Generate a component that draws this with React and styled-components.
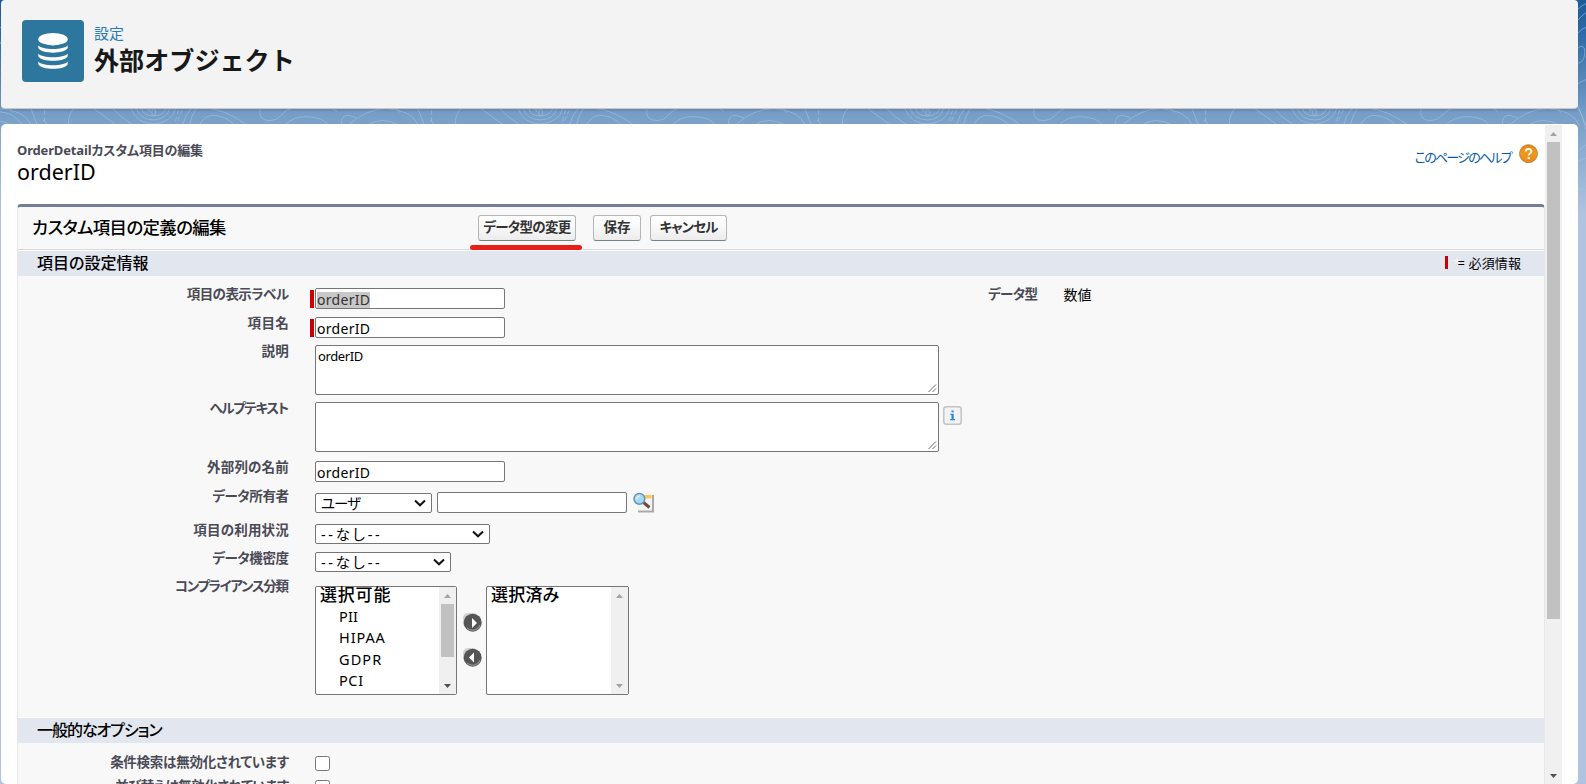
import React from "react";
import styled, { createGlobalStyle, css } from "styled-components";

const GlobalStyle = createGlobalStyle`
  * { box-sizing: border-box; }
  body {
    margin: 0;
    font-family: "Noto Sans", "Noto Sans CJK JP", sans-serif;
    color: #000;
  }
`;

const Page = styled.div`
  position: relative;
  width: 1586px;
  height: 784px;
  overflow: hidden;
  padding: 0 8px 0 1px;
  display: flex;
  flex-direction: column;
  gap: 15px;
  background: linear-gradient(#1b5c9b 0, #2d6ca8 35px, #789fc8 117px, #b0c4df 215px, #b0c4df 100%);
`;

const Backdrop = styled.svg`
  position: absolute;
  left: 0;
  top: 0;
`;

const Header = styled.header`
  position: relative;
  flex: none;
  height: 109px;
  display: flex;
  gap: 10px;
  padding: 20px 21px;
  background: #f3f3f3;
  border-radius: 4px;
  border-bottom: 1px solid #c9c7c5;
  box-shadow: 0 2px 2px rgba(0, 0, 0, 0.1);
`;

const ObjectIcon = styled.div`
  width: 62px;
  height: 62px;
  border-radius: 4px;
  background: #2d769e;
`;

const HeaderText = styled.div`
  display: flex;
  flex-direction: column;
  padding-top: 3px;
`;

const Fit = css`
  white-space: nowrap;
  letter-spacing: ${(p) => p.$ls || 0}px;
  font-feature-settings: ${(p) => (p.$full ? "normal" : '"palt"')};
`;

const Crumb = styled.span`
  ${Fit}
  font-size: 15px;
  line-height: 20px;
  color: #2a7ab5;
`;

const PageTitle = styled.h1`
  ${Fit}
  margin: 0;
  font-size: 25.1px;
  line-height: 34px;
  font-weight: 700;
  color: #181818;
`;

const Card = styled.main`
  position: relative;
  flex: none;
  height: 660px;
  display: flex;
  padding-top: 1px;
  background: #fff;
  border-radius: 5px;
  overflow: hidden;
`;

const Content = styled.div`
  width: 1544px;
  padding-left: 16px;
`;

const Intro = styled.div`
  height: 79px;
  display: flex;
  justify-content: space-between;
  padding: 15px 7px 0 0;
`;

const IntroTitles = styled.div`
  display: flex;
  flex-direction: column;
`;

const Kicker = styled.span`
  ${Fit}
  font-size: 13px;
  line-height: 20px;
  font-weight: 700;
  color: #4a4a56;
`;

const EntityName = styled.span`
  ${Fit}
  font-size: 21.5px;
  line-height: 23px;
`;

const HelpLink = styled.a`
  display: flex;
  gap: 8px;
  height: 28px;
  padding-top: 4px;
  color: #015ba7;
`;

const HelpText = styled.span`
  ${Fit}
  font-size: 13px;
  line-height: 20px;
  padding-top: 3px;
`;

const Panel = styled.section`
  width: 1528px;
  height: 620px;
  background: #f8f8f8;
  border: 1px solid #e6e6e6;
  border-top: 3px solid #747e96;
  border-radius: 4px 4px 0 0;
`;

const Toolbar = styled.div`
  height: 43px;
  display: flex;
  align-items: flex-start;
  padding-top: 8px;
  border-bottom: 1px solid #d8d8d8;
`;

const ToolbarTitle = styled.h2`
  ${Fit}
  width: 460px;
  margin: 0;
  padding: 0 0 0 14px;
  font-size: 17.4px;
  line-height: 24px;
  font-weight: 500;
`;

const Button = styled.button`
  ${Fit}
  position: relative;
  width: ${(p) => p.$w}px;
  height: 26px;
  margin: 0 ${(p) => p.$gap || 0}px 0 0;
  padding: 0 0 5px;
  display: flex;
  align-items: center;
  justify-content: center;
  overflow: visible;
  border: 1px solid #b5b5b5;
  border-bottom-color: #7f7f7f;
  border-radius: 3px;
  background: linear-gradient(#fff, #f7f7f7 50%, #ececec);
  font-family: inherit;
  font-size: 13.5px;
  font-weight: 700;
  color: #333;
`;

const Underline = styled.i`
  position: absolute;
  left: -9.5px;
  top: 28.7px;
  width: 112.5px;
  height: 5px;
  border-radius: 3px;
  background: #e81e1b;
`;

const SectionBar = styled.div`
  height: 26px;
  display: flex;
  justify-content: space-between;
  padding: 0 23px 0 19px;
  border-top: 1px solid #fff;
  background: #e2e6ee;
`;

const SectionTitle = styled.h3`
  ${Fit}
  margin: 0;
  font-size: 16px;
  line-height: 24px;
  font-weight: 500;
`;

const Required = styled.span`
  ${Fit}
  display: flex;
  align-items: center;
  font-size: 13px;
  line-height: 22px;
  padding-bottom: 2px;
`;

const RequiredMark = styled.i`
  width: ${(p) => p.$w}px;
  height: ${(p) => p.$h}px;
  background: #c00;
`;

const Asterisk = styled.span`
  width: 10px;
  padding-left: 6px;
  color: #f8f8f8;
`;

const Form = styled.div`
  padding-top: 2px;
`;

const Row = styled.div`
  display: flex;
  height: ${(p) => p.$h}px;
`;

const Label = styled.label`
  ${Fit}
  width: ${(p) => p.$w || 271}px;
  padding-top: ${(p) => p.$top}px;
  padding-right: ${(p) => Math.max(0, -(p.$ls || 0))}px;
  text-align: right;
  font-size: 13.5px;
  line-height: 16px;
  font-weight: 700;
  color: #4a4a56;
`;

const Controls = styled.div`
  display: flex;
  align-items: flex-start;
  padding-top: ${(p) => p.$top || 10}px;
`;

const MarkSlot = styled.div`
  width: 26px;
  height: 21px;
  display: flex;
  justify-content: flex-end;
  align-items: center;
  padding-right: 1px;
`;

const Box = styled.div`
  ${Fit}
  width: ${(p) => p.$w}px;
  height: ${(p) => p.$h}px;
  display: flex;
  background: #fff;
  border: 1px solid #767676;
  border-radius: 2px;
`;

const TextField = styled(Box)`
  align-items: center;
  padding: 2px 1px 0;
  font-size: 14px;
  line-height: 16px;
`;

const Highlight = styled.span`
  height: 16px;
  background: #c8c8c8;
  color: #333;
`;

const TextArea = styled(Box)`
  justify-content: space-between;
  align-items: flex-start;
  padding: 1px 1px 0 2px;
  font-size: 13px;
  line-height: 18px;
`;

const Grip = styled.svg`
  align-self: flex-end;
`;

const Select = styled(Box)`
  align-items: center;
  justify-content: space-between;
  padding: 0 5px 0 5px;
  font-size: 14.5px;
  line-height: 18px;
`;

const ListBox = styled(Box)`
  justify-content: space-between;
`;

const Options = styled.div`
  display: flex;
  flex-direction: column;
  padding-left: 4px;
`;

const OptionGroup = styled.span`
  ${Fit}
  height: 19px;
  font-size: 17px;
  line-height: 16px;
  font-weight: 500;
`;

const Option = styled.span`
  ${Fit}
  padding-left: 19px;
  font-size: 14.5px;
  line-height: 21.3px;
`;

const Track = styled.div`
  flex: none;
  width: ${(p) => p.$w || 17}px;
  display: flex;
  flex-direction: column;
  align-items: center;
  background: #f0f0f0;
`;

const Thumb = styled.div`
  width: 13px;
  height: ${(p) => p.$h}px;
  margin-bottom: auto;
  background: ${(p) => (p.$h ? "#c1c1c1" : "transparent")};
`;

const Movers = styled.div`
  width: 29px;
  display: flex;
  flex-direction: column;
  align-items: center;
  gap: 16px;
  padding: 27px 0 0 2px;
`;

const TypeValue = styled.span`
  ${Fit}
  padding: 8.5px 0 0 25.5px;
  font-size: 14px;
  line-height: 16px;
`;

const Check = styled.input`
  width: 15px;
  height: 15px;
  margin: 0;
`;

const Spacer = styled.div`
  flex: none;
  width: ${(p) => p.$w}px;
`;

const tile = (
  <>
    <ellipse cx="41" cy="37" rx="6" ry="9" />
    <path d="M5 24Q8 48 42 48Q72 46 78 24M-12 24Q0 60 42 60Q80 58 90 24M-28 24Q-10 72 42 72Q95 68 108 24M20 24L28 34L32 24" />
    <path d="M127 30L107 75M116 30L102 75M875 30V75" strokeDasharray="14 8" />
    <path d="M154 24Q135 45 128 75M170 24Q155 45 148 75M178 75Q195 45 220 46Q255 47 285 75M200 24Q260 30 320 75" />
    <path d="M360 24Q353 62 390 62Q410 62 425 45Q438 28 460 24M435 75Q460 49 500 50Q552 52 564 75M575 24L590 34" />
    <path d="M605 75Q602 45 625 46L650 53M625 75Q680 26 740 26Q815 30 835 75M683 75Q725 48 775 75M768 24L780 38" />
    <path d="M833 24L853 75M870 60L885 75M965 24Q943 45 947 75M1020 24L1090 75M1078 24Q1100 50 1140 75" />
  </>
);

function BackdropLines() {
  return (
    <Backdrop width="1586" height="784" fill="none" stroke="#a9c6e3" strokeOpacity="0.55" strokeWidth="3">
      {[-1, 0, 1, 2, 3].map((n) => (
        <g key={n} transform={`translate(${140 + n * 387} 100) scale(.3333)`}>{tile}</g>
      ))}
      <g strokeWidth="1">
        <path d="M1577 10Q1582 5 1587 3M1577 21Q1582 15 1587 12M1577 34Q1582 28 1587 27M1578 48Q1584 43 1585 52Q1584 64 1577 63M1577 84L1587 79M1577 104Q1583 117 1587 132M1577 152L1587 144M1577 162Q1582 158 1587 158M1577 188Q1582 191 1587 190M1577 205L1587 215M1577 220Q1582 223 1587 223" />
        <path d="M0 112Q12 112 22 124M0 28L3 25M0 44L3 38M0 180L3 178" />
      </g>
    </Backdrop>
  );
}

function DatabaseIcon() {
  return (
    <svg width="62" height="62" viewBox="0 0 62 62" fill="#fff">
      <ellipse cx="31" cy="19.200" rx="14.700" ry="6.200" />
      <path d="M16.300 25.300C20 30.300 42 30.300 45.700 25.300V28C43 34.200 19 34.200 16.300 28Z" />
      <path d="M16.300 33.500C20 38.500 42 38.500 45.700 33.500V36.200C43 42.400 19 42.400 16.300 36.200Z" />
      <path d="M16.300 41.500C20 46.500 42 46.500 45.700 41.500V44.200C43 50.400 19 50.400 16.300 44.200Z" />
    </svg>
  );
}

function HelpIcon() {
  return (
    <svg width="19" height="20" viewBox="0 0 19 20">
      <defs>
        <linearGradient id="orange" x2="0" y2="1">
          <stop offset="0" stopColor="#d98a1c" />
          <stop offset=".45" stopColor="#ee9a20" />
          <stop offset="1" stopColor="#e5861a" />
        </linearGradient>
      </defs>
      <circle cx="9.500" cy="9.700" r="9" fill="url(#orange)" stroke="#b9782d" strokeWidth=".8" />
      <path d="M6.800 7.500C6.800 4.200 12.300 4.200 12.300 7.500C12.300 9.200 9.700 9.400 9.700 11.500" fill="none" stroke="#fff4dc" strokeWidth="2" />
      <rect x="8.600" y="13" width="2.200" height="2.200" fill="#fff4dc" />
    </svg>
  );
}

function Arrow({ down, color = "#505050" }) {
  return (
    <svg width="17" height="17" viewBox="0 0 17 17">
      <path d={down ? "M5 7H12L8.500 11Z" : "M5 11H12L8.500 7Z"} fill={color} />
    </svg>
  );
}

function Chevron() {
  return (
    <svg width="12" height="8" viewBox="0 0 12 8">
      <path d="M1 1.500L6 6.300L11 1.500" fill="none" stroke="#111" strokeWidth="2" />
    </svg>
  );
}

function ResizeGrip() {
  return (
    <Grip width="9" height="10" viewBox="0 0 9 10" stroke="#555" strokeWidth=".9">
      <path d="M.5 8L8 .5M4.500 8L8 4.500" />
    </Grip>
  );
}

function InfoIcon() {
  return (
    <svg width="19" height="19" viewBox="0 0 19 19">
      <rect x=".8" y=".8" width="17.400" height="17.400" rx="2.500" fill="#f2f3f6" stroke="#c3c3c3" strokeWidth="1.500" />
      <path d="M8.500 4.500H10.700V6.300H8.500ZM7.300 7.700H10.700V13H12V14.300H7.200V13H8.500V9H7.300Z" fill="#2b83dc" />
    </svg>
  );
}

function LookupIcon() {
  return (
    <svg width="22" height="22" viewBox="0 0 22 22">
      <path d="M7 3H21V20.500H5V13Z" fill="#aaa" />
      <path d="M6 2H19V18.500H4.500V12Z" fill="#f4f4f4" />
      <path d="M11 3H18.500V6.500H11Z" fill="#ffc65c" />
      <path d="M10.500 10.500L16.500 15.500" stroke="#6e4b3a" strokeWidth="3" />
      <circle cx="6.400" cy="6.800" r="5.400" fill="#a6d9f4" stroke="#6b93b4" strokeWidth="1.500" />
      <path d="M3.700 7Q4.200 4 7.200 4" fill="none" stroke="#e9f8ff" strokeWidth="1.400" />
    </svg>
  );
}

function MoveIcon({ left }) {
  return (
    <svg width="19" height="19" viewBox="0 0 19 19">
      <rect width="15" height="15" rx="5" fill="#d2d2d2" />
      <circle cx="9.700" cy="9.700" r="9" fill="#555" />
      <path d="M4 15A8 8 0 0 0 17 12" fill="none" stroke="#888" strokeWidth="1.500" />
      <path d={left ? "M11 4.500V14.500L6 9.500Z" : "M9 5V15L14 10Z"} fill="#fff" />
    </svg>
  );
}

function Field({ label, h, top, ls, required, controlTop, children, extra }) {
  return (
    <Row $h={h}>
      <Label $top={top} $ls={ls}>{label}</Label>
      <Controls $top={controlTop}>
        <MarkSlot>{required && <RequiredMark $w={4} $h={18} />}</MarkSlot>
        {children}
      </Controls>
      {extra}
    </Row>
  );
}

export default function App() {
  return (
    <>
      <GlobalStyle />
      <Page>
        <BackdropLines />
        <Header>
          <ObjectIcon><DatabaseIcon /></ObjectIcon>
          <HeaderText>
            <Crumb $full>設定</Crumb>
            <PageTitle $full>外部オブジェクト</PageTitle>
          </HeaderText>
        </Header>
        <Card>
          <Content>
            <Intro>
              <IntroTitles>
                <Kicker $ls={-0.15}>OrderDetailカスタム項目の編集</Kicker>
                <EntityName>orderID</EntityName>
              </IntroTitles>
              <HelpLink>
                <HelpText $ls={-1.75}>このページのヘルプ</HelpText>
                <HelpIcon />
              </HelpLink>
            </Intro>
            <Panel>
              <Toolbar>
                <ToolbarTitle $ls={-0.6}>カスタム項目の定義の編集</ToolbarTitle>
                <Button $w={98} $gap={17} $ls={-0.7}>データ型の変更<Underline /></Button>
                <Button $w={48} $gap={9}>保存</Button>
                <Button $w={77} $ls={-0.9}>キャンセル</Button>
              </Toolbar>
              <SectionBar>
                <SectionTitle>項目の設定情報</SectionTitle>
                <Required $ls={0.1}>
                  <RequiredMark $w={3} $h={13} />
                  <Asterisk>*</Asterisk>= 必須情報
                </Required>
              </SectionBar>
              <Form>
                <Field
                  label="項目の表示ラベル"
                  h={29}
                  top={7.5}
                  ls={-0.55}
                  required
                  extra={
                    <>
                      <Label as="span" $w={533} $top={7.5} $ls={-0.6}>データ型</Label>
                      <TypeValue>数値</TypeValue>
                    </>
                  }
                >
                  <TextField $w={190} $h={21} $ls={0.3}><Highlight>orderID</Highlight></TextField>
                </Field>
                <Field label="項目名" h={28} top={7.5} ls={0.3} required>
                  <TextField $w={190} $h={21} $ls={0.3}>orderID</TextField>
                </Field>
                <Field label="説明" h={57} top={7.5} ls={0.3}>
                  <TextArea $w={624} $h={50} $ls={-0.4}>orderID<ResizeGrip /></TextArea>
                </Field>
                <Field label="ヘルプテキスト" h={59} top={8} ls={-1.3}>
                  <TextArea $w={624} $h={50}><span /><ResizeGrip /></TextArea>
                  <Spacer $w={4} />
                  <Controls $top={4}><InfoIcon /></Controls>
                </Field>
                <Field label="外部列の名前" h={31} top={7.5} ls={0.2}>
                  <TextField $w={190} $h={21} $ls={0.3}>orderID</TextField>
                </Field>
                <Field label="データ所有者" h={32} top={6} ls={-0.4}>
                  <Controls $top={1}><Select $w={117} $h={20} $ls={-1}>ユーザ<Chevron /></Select></Controls>
                  <Spacer $w={5} />
                  <TextField $w={190} $h={21} />
                  <Spacer $w={6} />
                  <LookupIcon />
                </Field>
                <Field label="項目の利用状況" h={28} top={7.5} ls={0.2}>
                  <Select $w={175} $h={20} $ls={2.7}>--なし--<Chevron /></Select>
                </Field>
                <Field label="データ機密度" h={34} top={7.5} ls={-0.4}>
                  <Select $w={136} $h={20} $ls={2.7}>--なし--<Chevron /></Select>
                </Field>
                <Field label="コンプライアンス分類" h={141} top={2} ls={-1.3}>
                  <ListBox $w={142} $h={109}>
                    <Options>
                      <OptionGroup $ls={0.8}>選択可能</OptionGroup>
                      <Option $ls={0.2}>PII</Option>
                      <Option $ls={0.9}>HIPAA</Option>
                      <Option $ls={1.1}>GDPR</Option>
                      <Option $ls={0.6}>PCI</Option>
                    </Options>
                    <Track>
                      <Arrow color="#a3a3a3" />
                      <Thumb $h={53} />
                      <Arrow down />
                    </Track>
                  </ListBox>
                  <Movers>
                    <MoveIcon />
                    <MoveIcon left />
                  </Movers>
                  <ListBox $w={143} $h={109}>
                    <Options><OptionGroup $ls={0.2}>選択済み</OptionGroup></Options>
                    <Track>
                      <Arrow color="#a3a3a3" />
                      <Thumb $h={0} />
                      <Arrow down color="#a3a3a3" />
                    </Track>
                  </ListBox>
                </Field>
              </Form>
              <SectionBar>
                <SectionTitle $ls={-1.05}>一般的なオプション</SectionTitle>
              </SectionBar>
              <Field label="条件検索は無効化されています" h={24} top={11} ls={-0.25} controlTop={13}>
                <Check type="checkbox" />
              </Field>
              <Field label="並び替えは無効化されています" h={24} top={11} ls={-0.5} controlTop={13}>
                <Check type="checkbox" />
              </Field>
            </Panel>
          </Content>
          <Track>
            <Arrow color="#a3a3a3" />
            <Thumb $h={477} />
            <Arrow down />
          </Track>
        </Card>
      </Page>
    </>
  );
}
